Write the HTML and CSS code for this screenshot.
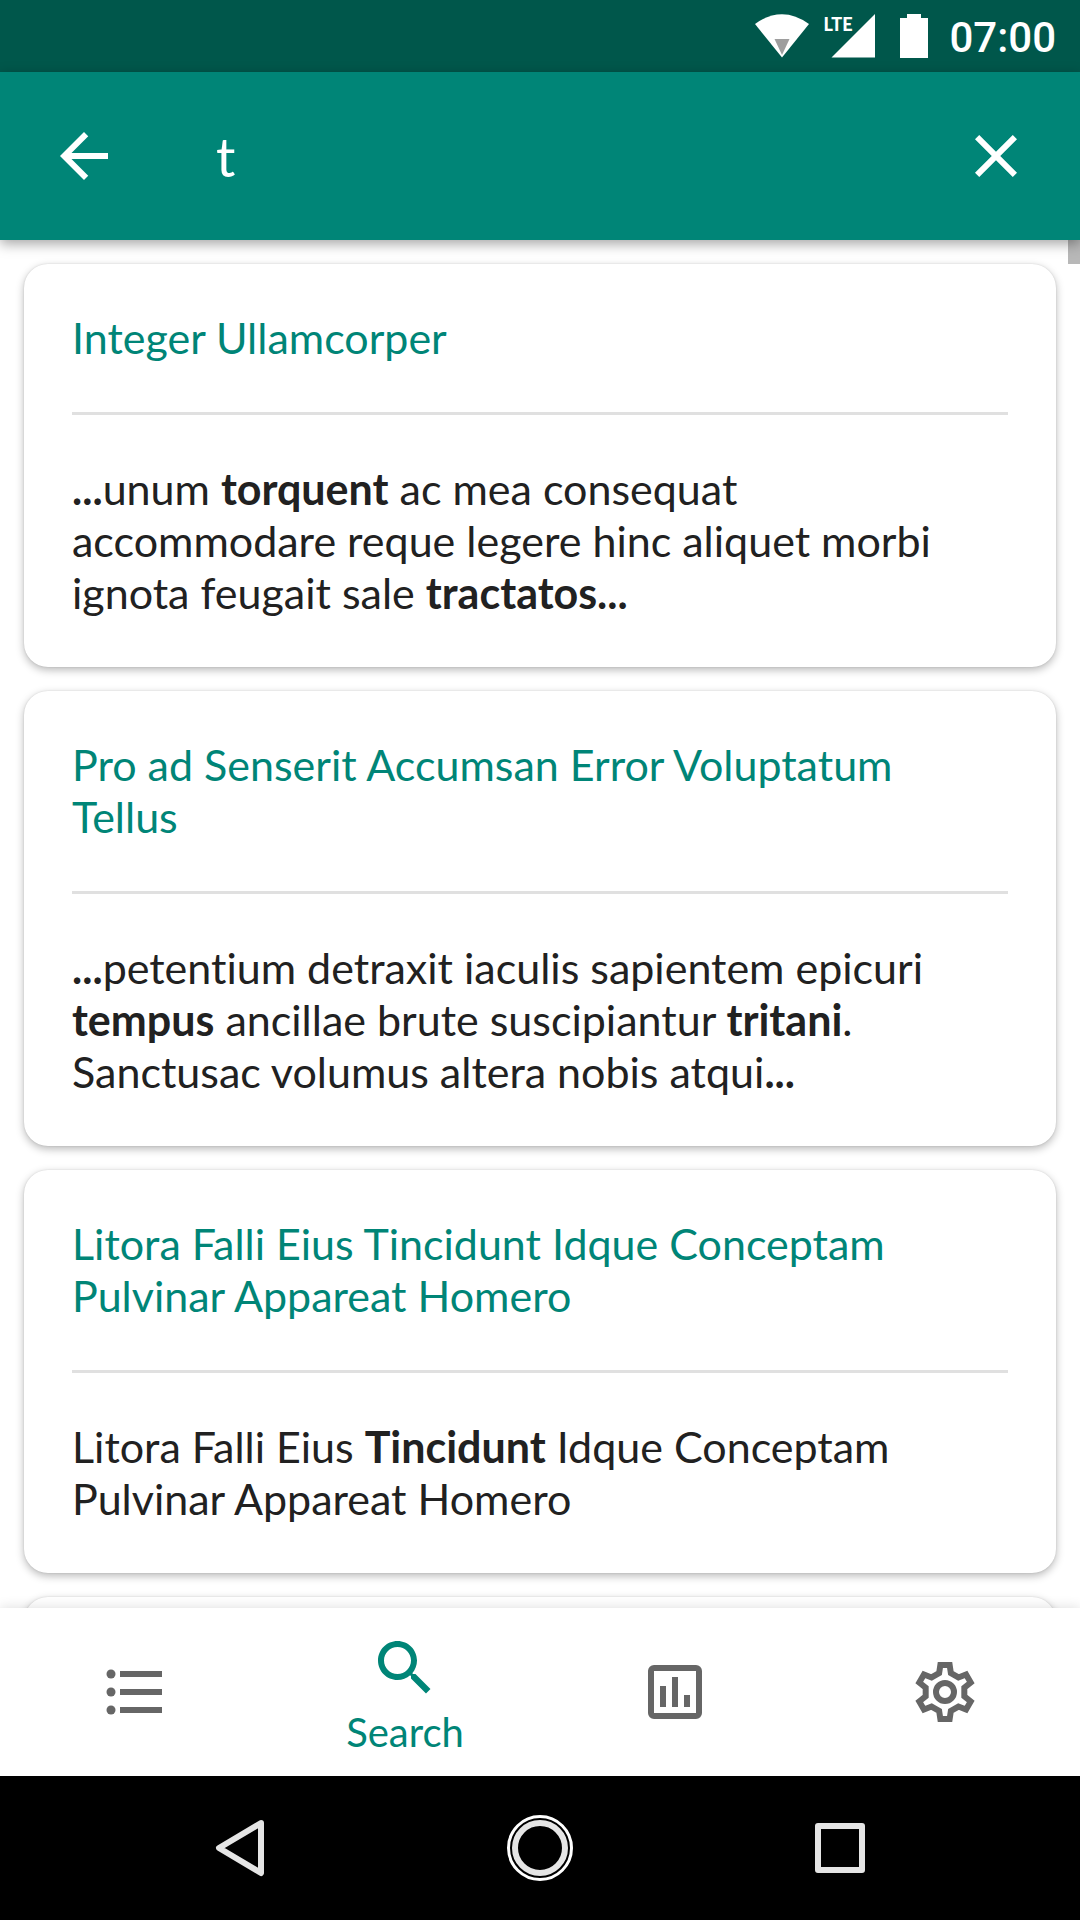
FILE: index.html
```
<!DOCTYPE html>
<html lang="en">
<head>
<meta charset="utf-8">
<meta name="viewport" content="width=device-width, initial-scale=1">
<title>Search</title>
<link rel="stylesheet" href="styles.css">
</head>
<body>
<div class="app">
  <div class="status">
    <svg class="status-wifi" viewBox="0 0 54 44" aria-hidden="true"><path d="M0 10Q27-9.500 54 10L27 43.500Z" fill="#fff"/><path d="M19.500 25h15L27 41z" fill="#9e9e9e"/></svg>
    <div class="status-cell">
      <span class="status-lte">LTE</span>
      <svg class="status-signal" viewBox="0 0 44 44" aria-hidden="true"><path d="M44 0v43.500H.500z" fill="#fff"/></svg>
    </div>
    <svg class="status-battery" viewBox="0 0 28 44" aria-hidden="true"><path d="M7 0h14v4h7v40H0V4h7z" fill="#fff"/></svg>
    <time class="status-time">07:00</time>
  </div>
  <header class="appbar">
    <button class="icon-button" type="button" aria-label="Back"><svg class="icon" viewBox="0 0 24 24" fill="currentColor"><path d="M20 11H7.830l5.590-5.590L12 4l-8 8 8 8 1.410-1.410L7.830 13H20z"/></svg></button>
    <input class="query" type="text" value="t" aria-label="Search text">
    <button class="icon-button" type="button" aria-label="Clear"><svg class="icon" viewBox="0 0 24 24" fill="currentColor"><path d="M19 6.410L17.590 5 12 10.590 6.410 5 5 6.410 10.590 12 5 17.590 6.410 19 12 13.410 17.590 19 19 17.590 13.410 12z"/></svg></button>
  </header>
  <main class="results">
    <div class="scroll-thumb"></div>
    <article class="card">
      <h2 class="card-title">Integer Ullamcorper</h2>
      <p class="card-text"><b>...</b>unum <b>torquent</b> ac mea consequat<br>accommodare reque legere hinc aliquet morbi<br>ignota feugait sale <b>tractatos...</b></p>
    </article>
    <article class="card">
      <h2 class="card-title">Pro ad Senserit Accumsan Error Voluptatum<br>Tellus</h2>
      <p class="card-text"><b>...</b>petentium detraxit iaculis sapientem epicuri<br><b>tempus</b> ancillae brute suscipiantur <b>tritani</b>.<br>Sanctusac volumus altera nobis atqui<b>...</b></p>
    </article>
    <article class="card">
      <h2 class="card-title">Litora Falli Eius Tincidunt Idque Conceptam<br>Pulvinar Appareat Homero</h2>
      <p class="card-text">Litora Falli Eius <b>Tincidunt</b> Idque Conceptam<br>Pulvinar Appareat Homero</p>
    </article>
    <article class="card"></article>
  </main>
  <nav class="tabs">
    <button class="tab" type="button" aria-label="List"><svg class="icon" viewBox="0 0 24 24" fill="currentColor"><circle cx="4" cy="6" r="1.500"/><circle cx="4" cy="12" r="1.500"/><circle cx="4" cy="18" r="1.500"/><path d="M7 5h14v2H7zM7 11h14v2H7zM7 17h14v2H7z"/></svg></button>
    <button class="tab tab-active" type="button" aria-current="page"><svg class="icon" viewBox="0 0 24 24" fill="currentColor"><path d="M15.500 14h-.790l-.280-.270C15.410 12.590 16 11.110 16 9.500 16 5.910 13.090 3 9.500 3S3 5.910 3 9.500 5.910 16 9.500 16c1.610 0 3.090-.590 4.230-1.570l.270.280v.790l5 4.990L20.490 19l-4.990-5zm-6 0C7.010 14 5 11.990 5 9.500S7.010 5 9.500 5 14 7.010 14 9.500 11.990 14 9.500 14z"/></svg><span class="tab-label">Search</span></button>
    <button class="tab" type="button" aria-label="Statistics"><svg class="icon" viewBox="0 0 24 24" fill="currentColor"><path fill-rule="evenodd" d="M5 3h14a2 2 0 0 1 2 2v14a2 2 0 0 1-2 2H5a2 2 0 0 1-2-2V5a2 2 0 0 1 2-2zm0 2v14h14V5zM7 10h2v7H7zM11 7h2v10h-2zM15 13h2v4h-2z"/></svg></button>
    <button class="tab" type="button" aria-label="Settings"><svg class="icon" viewBox="-12 -12 24 24" fill="none" stroke="currentColor" stroke-width="2"><path d="M-1.550-9H1.550L1.960-6.300 4.480-4.850 7.020-5.840 8.570-3.160 6.440-1.450V1.450L8.570 3.160 7.020 5.840 4.480 4.850 1.960 6.300 1.550 9H-1.550L-1.960 6.300-4.480 4.850-7.020 5.840-8.570 3.160-6.440 1.450V-1.450L-8.570-3.160-7.020-5.840-4.480-4.850-1.960-6.300z"/><circle r="3"/></svg></button>
  </nav>
  <div class="system">
    <button class="system-button" type="button" aria-label="System back"><svg class="icon" viewBox="0 0 72 72" fill="none" stroke="#e5e5e5" stroke-width="6" stroke-linejoin="round"><path d="M57 11L15 36 57 61z"/></svg></button>
    <button class="system-button" type="button" aria-label="Home"><svg class="icon" viewBox="0 0 72 72" fill="none"><circle cx="36" cy="36" r="31.500" stroke="#fff" stroke-width="3"/><circle cx="36" cy="36" r="25" stroke="#e5e5e5" stroke-width="6"/></svg></button>
    <button class="system-button" type="button" aria-label="Recent apps"><svg class="icon" viewBox="0 0 72 72" fill="none" stroke="#e5e5e5" stroke-width="6" stroke-linejoin="round"><path d="M14 14h44v44H14z"/></svg></button>
  </div>
</div>
</body>
</html>
```
FILE: styles.css
```
* {
  box-sizing: border-box;
}

body {
  margin: 0;
  background: #fff;
  color: #212121;
  font-family: Lato, "Open Sans", sans-serif;
  font-size: 43px;
  font-variant-ligatures: none;
  line-height: 52px;
}

button {
  margin: 0;
  padding: 0;
  border: 0;
  background: none;
  color: inherit;
  font: inherit;
}

svg {
  display: block;
}

.app {
  display: flex;
  flex-direction: column;
  height: 100vh;
}

.status {
  display: flex;
  justify-content: flex-end;
  align-items: center;
  height: 72px;
  padding: 0 24px;
  background: #00574b;
  color: #fff;
}

.status-wifi {
  width: 54px;
  height: 44px;
}

.status-cell {
  display: flex;
  justify-content: flex-end;
  position: relative;
  width: 52px;
  margin-left: 14px;
}

.status-lte {
  position: absolute;
  top: 0;
  left: 0;
  font-size: 18px;
  font-weight: 900;
  line-height: 20px;
}

.status-signal {
  width: 44px;
  height: 44px;
}

.status-battery {
  width: 28px;
  height: 44px;
  margin: 0 21px 0 25px;
}

.status-time {
  padding-top: 4px;
  font-family: Roboto, sans-serif;
  font-size: 42px;
  font-weight: 500;
}

.appbar {
  display: flex;
  align-items: center;
  position: relative;
  z-index: 2;
  padding: 48px;
  background: #008577;
  color: #fff;
  box-shadow: 0 4px 12px rgba(0, 0, 0, 0.35);
}

.icon-button {
  flex: none;
}

.icon {
  width: 72px;
  height: 72px;
}

.query {
  flex: 1;
  min-width: 0;
  height: 72px;
  padding: 0 0 0 96px;
  border: 0;
  outline: 0;
  background: none;
  color: inherit;
  font: inherit;
  font-size: 54px;
}

.results {
  display: flex;
  flex: 1;
  flex-direction: column;
  gap: 24px;
  position: relative;
  min-height: 0;
  padding: 24px;
  overflow: hidden;
}

.scroll-thumb {
  position: absolute;
  top: 0;
  right: 0;
  width: 12px;
  height: 24px;
  background: #b8b8b8;
}

.card {
  flex: none;
  min-height: 300px;
  padding: 48px;
  border-radius: 24px;
  background: #fff;
  box-shadow: 0 3px 8px rgba(0, 0, 0, 0.28), 0 0 2px rgba(0, 0, 0, 0.12);
}

.card-title {
  margin: 0;
  padding-bottom: 48px;
  border-bottom: 3px solid #e0e0e0;
  color: #008577;
  font-size: 43px;
  font-weight: 400;
}

.card-text {
  margin: 48px 0 0;
}

.tabs {
  display: flex;
  position: relative;
  z-index: 1;
  height: 168px;
  background: #fff;
  color: #666;
  box-shadow: 0 0 12px rgba(0, 0, 0, 0.14);
}

.tab {
  display: flex;
  flex: 1;
  flex-direction: column;
  align-items: center;
  justify-content: center;
}

.tab-active {
  justify-content: flex-start;
  padding-top: 24px;
  color: #008577;
}

.tab-label {
  font-size: 40px;
  line-height: 56px;
}

.system {
  display: flex;
  height: 144px;
  padding: 0 90px;
  background: #000;
}

.system-button {
  display: flex;
  flex: 1;
  align-items: center;
  justify-content: center;
}
```
